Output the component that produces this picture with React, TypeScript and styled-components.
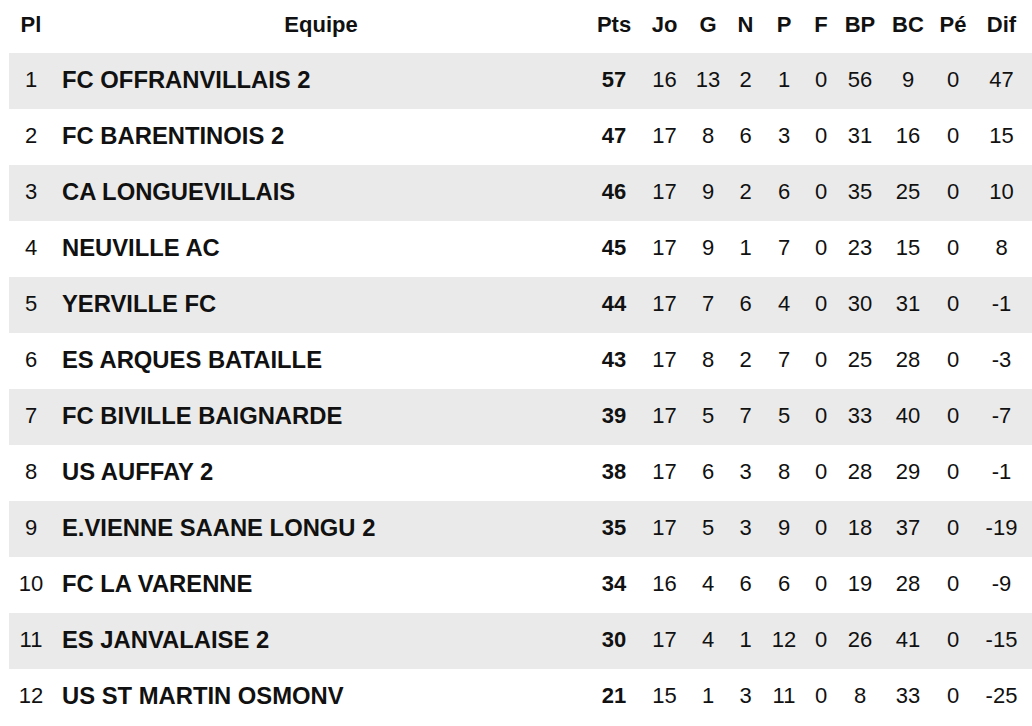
import React from 'react'
import styled, { createGlobalStyle } from 'styled-components'

const GlobalStyle = createGlobalStyle`
    html, body {
        margin: 0;
        padding: 0;
        background: #ffffff;
    }
    body {
        font-family: 'Liberation Sans', Arial, Helvetica, sans-serif;
        color: #111111;
        overflow: hidden;
    }
`

type Team = {
    pl: number
    name: string
    stats: number[]
}

const teams: Team[] = [
    { pl: 1, name: 'FC OFFRANVILLAIS 2', stats: [57, 16, 13, 2, 1, 0, 56, 9, 0, 47] },
    { pl: 2, name: 'FC BARENTINOIS 2', stats: [47, 17, 8, 6, 3, 0, 31, 16, 0, 15] },
    { pl: 3, name: 'CA LONGUEVILLAIS', stats: [46, 17, 9, 2, 6, 0, 35, 25, 0, 10] },
    { pl: 4, name: 'NEUVILLE AC', stats: [45, 17, 9, 1, 7, 0, 23, 15, 0, 8] },
    { pl: 5, name: 'YERVILLE FC', stats: [44, 17, 7, 6, 4, 0, 30, 31, 0, -1] },
    { pl: 6, name: 'ES ARQUES BATAILLE', stats: [43, 17, 8, 2, 7, 0, 25, 28, 0, -3] },
    { pl: 7, name: 'FC BIVILLE BAIGNARDE', stats: [39, 17, 5, 7, 5, 0, 33, 40, 0, -7] },
    { pl: 8, name: 'US AUFFAY 2', stats: [38, 17, 6, 3, 8, 0, 28, 29, 0, -1] },
    { pl: 9, name: 'E.VIENNE SAANE LONGU 2', stats: [35, 17, 5, 3, 9, 0, 18, 37, 0, -19] },
    { pl: 10, name: 'FC LA VARENNE', stats: [34, 16, 4, 6, 6, 0, 19, 28, 0, -9] },
    { pl: 11, name: 'ES JANVALAISE 2', stats: [30, 17, 4, 1, 12, 0, 26, 41, 0, -15] },
    { pl: 12, name: 'US ST MARTIN OSMONV', stats: [21, 15, 1, 3, 11, 0, 8, 33, 0, -25] },
]

const statHeaders = ['Pts', 'Jo', 'G', 'N', 'P', 'F', 'BP', 'BC', 'Pé', 'Dif']

const Page = styled.div`
    padding-left: 9px;
`

const Table = styled.div`
    display: flex;
    flex-direction: column;
    width: 1023px;
`

const Row = styled.div<{ $striped?: boolean; $header?: boolean }>`
    display: grid;
    grid-template-columns: 44px 536px 50px 51px 36px 39px 38px 36px 42px 54px 36px 61px;
    align-items: center;
    box-sizing: border-box;
    height: ${({ $header }) => ($header ? '53px' : '56px')};
    padding-bottom: 3px;
    background: ${({ $striped }) => ($striped ? '#eaeaea' : 'transparent')};
    font-size: 22px;
    font-weight: ${({ $header }) => ($header ? 700 : 400)};
`

const Cell = styled.div<{ $bold?: boolean }>`
    text-align: center;
    white-space: nowrap;
    font-weight: ${({ $bold }) => ($bold ? 700 : 'inherit')};
`

const TeamCell = styled.div<{ $header?: boolean }>`
    text-align: ${({ $header }) => ($header ? 'center' : 'left')};
    padding-left: ${({ $header }) => ($header ? '0' : '9px')};
    font-size: ${({ $header }) => ($header ? '22px' : '23.8px')};
    font-weight: 700;
    white-space: nowrap;
`

export default function App() {
    return (
        <>
            <GlobalStyle />
            <Page>
                <Table>
                    <Row $header>
                        <Cell>Pl</Cell>
                        <TeamCell $header>Equipe</TeamCell>
                        {statHeaders.map((h) => (
                            <Cell key={h}>{h}</Cell>
                        ))}
                    </Row>
                    {teams.map((t) => (
                        <Row key={t.pl} $striped={t.pl % 2 === 1}>
                            <Cell>{t.pl}</Cell>
                            <TeamCell>{t.name}</TeamCell>
                            {t.stats.map((v, i) => (
                                <Cell key={i} $bold={i === 0}>
                                    {v}
                                </Cell>
                            ))}
                        </Row>
                    ))}
                </Table>
            </Page>
        </>
    )
}
